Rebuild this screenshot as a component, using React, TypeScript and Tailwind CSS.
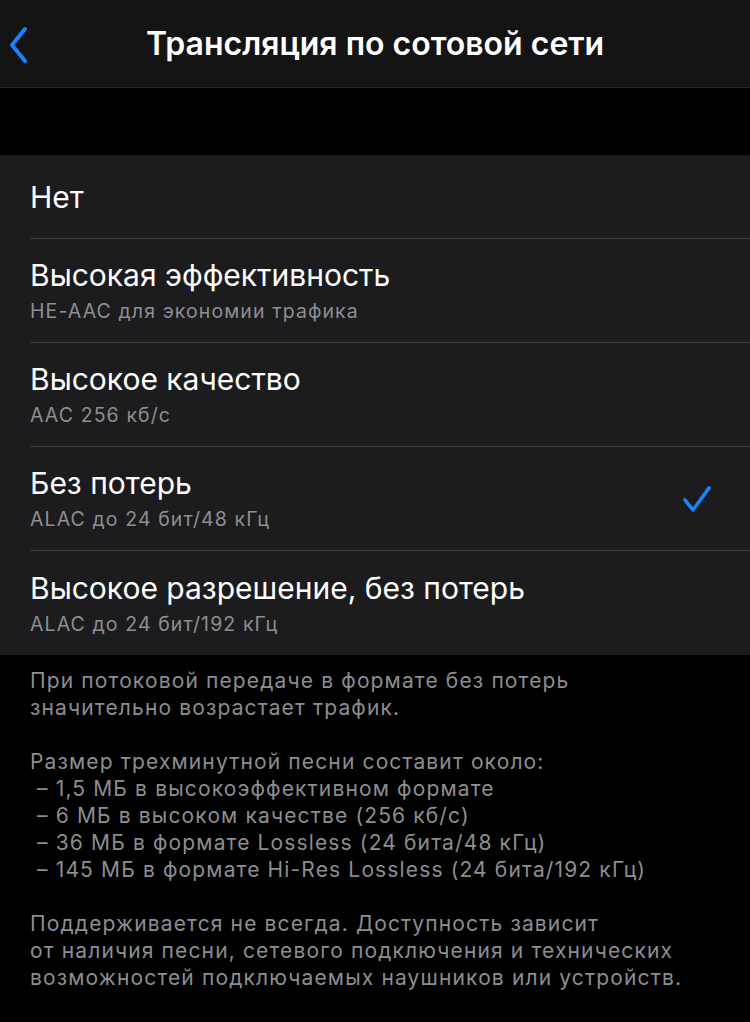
import React from "react";

type Option = { title: string; subtitle?: string; checked?: boolean };

const options: Option[] = [
  { title: "Нет" },
  { title: "Высокая эффективность", subtitle: "HE-AAC для экономии трафика" },
  { title: "Высокое качество", subtitle: "AAC 256 кб/с" },
  { title: "Без потерь", subtitle: "ALAC до 24 бит/48 кГц", checked: true },
  { title: "Высокое разрешение, без потерь", subtitle: "ALAC до 24 бит/192 кГц" },
];

function Chevron() {
  return (
    <svg width="22" height="38" viewBox="0 0 22 38" fill="none">
      <path d="M17 3 L4 19 L17 35" stroke="#1a82fb" strokeWidth="4" strokeLinecap="round" strokeLinejoin="round" />
    </svg>
  );
}

function Check() {
  return (
    <svg width="30" height="28" viewBox="0 0 30 28" fill="none">
      <path d="M3 15 L11 25 L27 3" stroke="#1a82fb" strokeWidth="3.6" strokeLinecap="round" strokeLinejoin="round" />
    </svg>
  );
}

export default function App() {
  return (
    <div
      className="w-[750px] h-[1022px] bg-black text-white overflow-hidden"
      style={{ fontFamily: "Inter, 'Noto Sans', sans-serif" }}
    >
      <header className="relative h-[88px] bg-[#141414] border-b border-[#262626] flex items-center justify-center">
        <div className="absolute left-[8px] top-[26px]">
          <Chevron />
        </div>
        <h1 className="text-[32px] font-semibold text-white">Трансляция по сотовой сети</h1>
      </header>

      <div className="h-[67px]" />

      <ul className="bg-[#1c1c1e]">
        {options.map((o, i) => (
          <li key={o.title} className="pl-[30px]">
            <div
              className={
                "flex items-center pr-[38px] " +
                (i < options.length - 1 ? "border-b border-[#38383a] " : "") +
                (o.subtitle ? "h-[104px]" : "h-[84px]")
              }
            >
              <div className="flex-1 flex flex-col">
                <span className="text-[30px] leading-[36px] text-white">{o.title}</span>
                {o.subtitle && (
                  <span className="text-[19.5px] leading-[26px] tracking-[1.1px] text-[#8e8e93] mt-[5px]">
                    {o.subtitle}
                  </span>
                )}
              </div>
              {o.checked && <Check />}
            </div>
          </li>
        ))}
      </ul>

      <div className="px-[30px] pt-[12px] text-[21px] leading-[27px] tracking-[1.14px] text-[#8d8d92]">
        <p>
          При потоковой передаче в формате без потерь
          <br />
          значительно возрастает трафик.
        </p>
        <p className="mt-[27px]">
          Размер трехминутной песни составит около:
          <br />
          &nbsp;– 1,5 МБ в высокоэффективном формате
          <br />
          &nbsp;– 6 МБ в высоком качестве (256 кб/с)
          <br />
          &nbsp;– 36 МБ в формате Lossless (24 бита/48 кГц)
          <br />
          &nbsp;– 145 МБ в формате Hi-Res Lossless (24 бита/192 кГц)
        </p>
        <p className="mt-[27px]">
          Поддерживается не всегда. Доступность зависит
          <br />
          от наличия песни, сетевого подключения и технических
          <br />
          возможностей подключаемых наушников или устройств.
        </p>
      </div>
    </div>
  );
}
